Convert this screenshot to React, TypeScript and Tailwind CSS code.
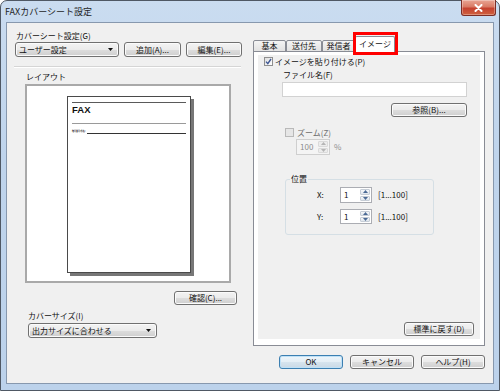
import React from 'react';

const btnFace =
  'bg-[linear-gradient(to_bottom,#f3f3f3_0%,#ebebeb_50%,#dddddd_51%,#cfcfcf_100%)] shadow-[inset_0_0_0_1px_#fbfbfb]';

const Btn: React.FC<{ children: React.ReactNode; className?: string; def?: boolean }> = ({ children, className = '', def }) => (
  <div
    className={`flex shrink-0 items-center justify-center rounded-[3px] border text-[8px] leading-none text-[#111] ${
      def
        ? 'border-[#3c7fb1] bg-[linear-gradient(to_bottom,#eef6fb_0%,#e4eef5_50%,#d6e4ee_51%,#cad9e5_100%)] shadow-[inset_0_0_0_1px_#bfe1f7]'
        : `border-[#707070] ${btnFace}`
    } ${className}`}
  >
    {children}
  </div>
);

const Combo: React.FC<{ label: string; className?: string }> = ({ label, className = '' }) => (
  <div
    className={`flex shrink-0 items-center justify-between rounded-[3px] border border-[#707070] pl-[3px] pr-[5px] text-[8px] leading-none text-[#111] ${btnFace} ${className}`}
  >
    <span>{label}</span>
    <svg width="5" height="3" viewBox="0 0 5 3">
      <path d="M0 0H5L2.5 3Z" fill="#111" />
    </svg>
  </div>
);

const Spin: React.FC<{ value: string; disabled?: boolean; className?: string }> = ({ value, disabled, className = '' }) => (
  <div
    className={`flex shrink-0 border ${
      disabled ? 'border-[#cfcfcf] bg-[#f4f4f4] text-[#8d8d8d]' : 'border-[#abadb3] bg-white text-[#111]'
    } ${className}`}
  >
    <div className="flex flex-1 items-center pl-[3px] text-[8px] leading-none">{value}</div>
    <div className="flex w-[12px] flex-col gap-[1px] p-[1px]">
      {[0, 1].map((i) => (
        <div
          key={i}
          className={`flex flex-1 items-center justify-center rounded-[1px] border ${
            disabled ? 'border-[#dadada] bg-[#ececec]' : 'border-[#c6cdd6] bg-[linear-gradient(to_bottom,#f6f8fa,#dfe5ec)]'
          }`}
        >
          <svg width="5" height="3" viewBox="0 0 5 3">
            <path d={i === 0 ? 'M0 3H5L2.5 0Z' : 'M0 0H5L2.5 3Z'} fill={disabled ? '#b5b5b5' : '#4b6a95'} />
          </svg>
        </div>
      ))}
    </div>
  </div>
);

const Check: React.FC<{ checked?: boolean; disabled?: boolean }> = ({ checked, disabled }) => (
  <div
    className={`flex h-[9px] w-[9px] shrink-0 items-center justify-center border ${
      disabled ? 'border-[#b9b9b9] bg-[#e6e6e6]' : 'border-[#8f8f8f] bg-[linear-gradient(135deg,#dedede,#ffffff)]'
    }`}
  >
    {checked && (
      <svg width="7" height="7" viewBox="0 0 7 7">
        <path d="M1 3.6L2.8 5.6L6 1" stroke="#3e5794" strokeWidth="1.4" fill="none" />
      </svg>
    )}
  </div>
);

export default function App() {
  return (
    <div className="h-[391px] w-[500px] bg-white font-['Noto_Sans_CJK_JP','Noto_Sans',sans-serif] text-[8px] text-[#111]">
      <div className="flex h-[391px] w-[500px] flex-col rounded-t-[7px] border border-[#4f5864] bg-[linear-gradient(to_bottom,#cadcf0,#bfd4ec_40%,#bcd2eb)]">
        {/* title bar */}
        <div className="flex h-[21px] shrink-0 items-start justify-between">
          <div className="pl-[4px] pt-[6px] text-[9px] leading-[10px] text-[#1e1e1e]">FAXカバーシート設定</div>
          <div className="-mt-[1px] mr-[3px] flex h-[16px] w-[35px] items-center justify-center rounded-b-[3px] border border-t-0 border-[#7c2d25] bg-[linear-gradient(to_bottom,#e9a594_0%,#d97a65_45%,#c5412f_55%,#d0623f_100%)] shadow-[inset_0_0_0_1px_rgba(255,255,255,0.3)]">
            <svg width="9" height="8" viewBox="0 0 9 8">
              <path d="M1.5 1L7.5 7M7.5 1L1.5 7" stroke="white" strokeWidth="2" strokeLinecap="round" />
            </svg>
          </div>
        </div>

        {/* client area */}
        <div className="mx-[5px] flex h-[362px] shrink-0 border border-[#8798ae] bg-[#f0f0f0]">
          {/* left column */}
          <div className="flex w-[246px] shrink-0 flex-col pl-[7px]">
            <div className="mt-[6px] h-[13px] pl-[2px] leading-[13px]">カバーシート設定(G)</div>
            <div className="flex h-[15px]">
              <Combo label="ユーザー設定" className="ml-[1px] w-[104px]" />
              <Btn className="ml-[5px] w-[57px]">追加(A)...</Btn>
              <Btn className="ml-[5px] w-[56px]">編集(E)...</Btn>
            </div>
            <div className="mt-[9px] h-[2px] w-[227px] border-t border-b border-t-[#d5d5d5] border-b-white" />
            <div className="ml-[12px] mt-[3px] h-[12px] leading-[12px]">レイアウト</div>
            <div className="ml-[11px] mt-[1px] h-[199px] w-[206px] border-2 border-[#a9a9a9] bg-white pl-[40px] pt-[10px]">
              <div className="flex h-[177px] w-[124px] flex-col border border-[#4a4a4a] bg-white px-[4px] shadow-[3px_3px_0_#777]">
                <div className="mt-[5px] h-[1px] bg-[#5a5a5a]" />
                <div className="h-[12px] font-['Liberation_Sans',sans-serif] text-[9.5px] font-bold leading-[13px] text-[#111]">FAX</div>
                <div className="mt-[8px] h-[1px] bg-[#9a9a9a]" />
                <div className="mt-[4px] flex h-[6px] items-end">
                  <span className="whitespace-nowrap pr-[1px] text-[2px] font-bold leading-[4px] text-[#222]">略号番号(件名)</span>
                  <div className="h-[1px] flex-1 bg-[#333]" />
                </div>
              </div>
            </div>
            <Btn className="ml-[160px] mt-[8px] h-[14px] w-[63px]">確認(C)...</Btn>
            <div className="ml-[14px] mt-[5px] h-[12px] leading-[12px]">カバーサイズ(I)</div>
            <Combo label="出力サイズに合わせる" className="ml-[14px] mt-[1px] h-[15px] w-[129px]" />
          </div>

          {/* right column */}
          <div className="flex w-[232px] shrink-0 flex-col">
            <div className="relative z-10 -mb-[1px] mt-[13px] flex h-[16px] items-end">
              <div className="flex h-[12px] w-[33px] items-center justify-center rounded-t-[2px] border border-[#898c95] bg-[linear-gradient(to_bottom,#f4f4f4,#e2e2e2)] leading-none">基本</div>
              <div className="flex h-[12px] w-[36px] items-center justify-center rounded-t-[2px] border border-[#898c95] bg-[linear-gradient(to_bottom,#f4f4f4,#e2e2e2)] leading-none">送付先</div>
              <div className="flex h-[12px] w-[33px] items-center justify-center rounded-t-[2px] border border-[#898c95] bg-[linear-gradient(to_bottom,#f4f4f4,#e2e2e2)] leading-none">発信者</div>
              <div className="relative flex h-[16px] w-[40px] items-center justify-center rounded-t-[2px] border border-b-0 border-[#898c95] bg-white pb-[1px] leading-none">
                イメージ
                <div className="absolute -bottom-[3px] -left-[3px] -right-[4px] -top-[5px] border-[3px] border-[#ff0000]" />
              </div>
            </div>
            <div className="flex h-[295px] flex-col border border-[#898c95] bg-white px-[4px] pb-[6px] pt-[3px]">
              <div className="flex flex-1 flex-col bg-[#f0f0f0]">
                <div className="ml-[6px] mt-[2px] flex h-[9px] items-center">
                  <Check checked />
                  <span className="ml-[2px] leading-none">イメージを貼り付ける(P)</span>
                </div>
                <div className="ml-[25px] mt-[3px] h-[12px] leading-[12px]">ファイル名(F)</div>
                <div className="ml-[24px] mt-[1px] h-[15px] w-[185px] border border-[#d2d2d2] bg-white" />
                <Btn className="ml-[133px] mt-[6px] h-[14px] w-[76px]">参照(B)...</Btn>
                <div className="ml-[27px] mt-[11px] flex h-[9px] items-center">
                  <Check disabled />
                  <span className="ml-[3px] leading-none text-[#6d6d6d]">ズーム(Z)</span>
                </div>
                <div className="ml-[38px] mt-[2px] flex h-[16px] items-center">
                  <Spin value="100" disabled className="h-[16px] w-[34px]" />
                  <span className="ml-[4px] leading-none text-[#8d8d8d]">%</span>
                </div>
                <fieldset className="ml-[27px] mt-[21px] w-[149px] rounded-[3px] border border-[#d5dfe5] pb-[10px] pt-[5px]">
                  <legend className="ml-[4px] h-[6px] px-[1px] leading-[6px]">位置</legend>
                  <div className="flex h-[16px] items-center pl-[31px]">
                    <span className="w-[23px] leading-none">X:</span>
                    <Spin value="1" className="h-[16px] w-[32px]" />
                    <span className="ml-[6px] leading-none">[1...100]</span>
                  </div>
                  <div className="mt-[6px] flex h-[15px] items-center pl-[31px]">
                    <span className="w-[23px] leading-none">Y:</span>
                    <Spin value="1" className="h-[15px] w-[32px]" />
                    <span className="ml-[6px] leading-none">[1...100]</span>
                  </div>
                </fieldset>
                <Btn className="mb-[3px] mr-[6px] mt-auto h-[14px] w-[70px] self-end">標準に戻す(D)</Btn>
              </div>
            </div>
            <div className="ml-[26px] mt-[9px] flex h-[14px] gap-[7px]">
              <Btn def className="h-[14px] w-[64px]">OK</Btn>
              <Btn className="h-[14px] w-[64px]">キャンセル</Btn>
              <Btn className="h-[14px] w-[64px]">ヘルプ(H)</Btn>
            </div>
          </div>
        </div>
      </div>
    </div>
  );
}
